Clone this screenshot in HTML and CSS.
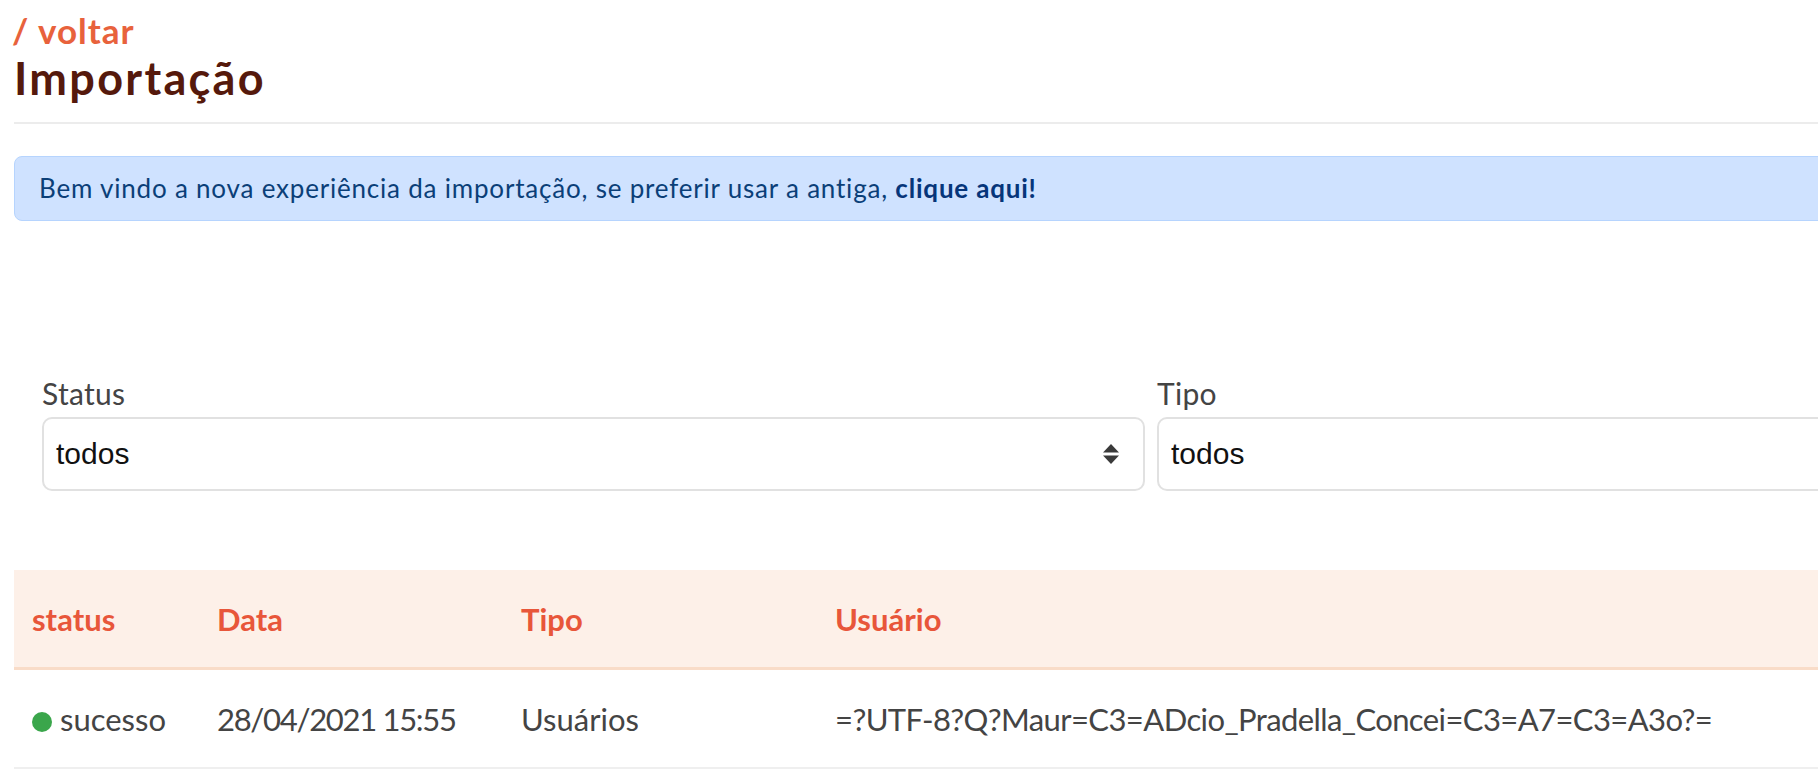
FILE: index.html
```html
<!DOCTYPE html>
<html lang="pt-BR">
<head>
<meta charset="utf-8">
<title>Importação</title>
<link rel="stylesheet" href="styles.css">
</head>
<body>
<div class="page">
  <header class="page-header">
    <a class="back" href="#">/ voltar</a>
    <h1 class="title">Importação</h1>
  </header>

  <div class="alert">Bem vindo a nova experiência da importação, se preferir usar a antiga, <a href="#" class="alert-link">clique aqui!</a></div>

  <div class="filters">
    <div class="field">
      <label class="label">Status</label>
      <div class="select">
        <span class="select-value">todos</span>
        <svg class="select-arrow" width="16" height="20" viewBox="0 0 16 20"><path d="M8 0 L16 8.5 L0 8.5 Z" fill="#3a3a3a"/><path d="M0 11.5 L16 11.5 L8 20 Z" fill="#3a3a3a"/></svg>
      </div>
    </div>
    <div class="field">
      <label class="label">Tipo</label>
      <div class="select">
        <span class="select-value">todos</span>
        <svg class="select-arrow" width="16" height="20" viewBox="0 0 16 20"><path d="M8 0 L16 8.5 L0 8.5 Z" fill="#3a3a3a"/><path d="M0 11.5 L16 11.5 L8 20 Z" fill="#3a3a3a"/></svg>
      </div>
    </div>
  </div>

  <table class="table">
    <thead>
      <tr>
        <th class="c-status">status</th>
        <th class="c-data">Data</th>
        <th class="c-tipo">Tipo</th>
        <th class="c-user">Usuário</th>
      </tr>
    </thead>
    <tbody>
      <tr>
        <td class="c-status"><span class="dot"></span>sucesso</td>
        <td class="c-data"><span class="date">28/04/2021 15:55</span></td>
        <td class="c-tipo">Usuários</td>
        <td class="c-user"><span class="user">=?UTF-8?Q?Maur=C3=ADcio_Pradella_Concei=C3=A7=C3=A3o?=</span></td>
      </tr>
    </tbody>
  </table>
</div>
</body>
</html>
```
FILE: styles.css
```css
html, body {
  margin: 0;
  padding: 0;
  overflow: hidden;
  background: #ffffff;
}

body {
  font-family: Lato, "Noto Sans", sans-serif;
  color: #3c3c3c;
}

.page {
  width: 2290px;
  padding-left: 14px;
  padding-top: 12px;
}

.page-header {
  display: flex;
  flex-direction: column;
  border-bottom: 2px solid #ececec;
  padding-bottom: 19px;
}

.back {
  font-size: 35px;
  font-weight: 700;
  line-height: 36px;
  letter-spacing: 1px;
  margin-left: -2px;
  color: #e8623c;
  text-decoration: none;
}

.title {
  margin: 5px 0 0 0;
  font-size: 45px;
  font-weight: 700;
  line-height: 50px;
  letter-spacing: 2.3px;
  color: #55190c;
}

.alert {
  margin-top: 32px;
  background: #cfe2ff;
  border: 1px solid #b6d4fe;
  border-radius: 8px;
  color: #0b3f78;
  font-size: 26px;
  line-height: 29px;
  letter-spacing: 0.8px;
  padding: 17px 24px;
}

.alert-link {
  color: #06357a;
  font-weight: 700;
  text-decoration: none;
}

.filters {
  display: grid;
  grid-template-columns: 1103px 1103px;
  gap: 12px;
  padding: 0 28px;
  margin-top: 156px;
}

.field {
  display: flex;
  flex-direction: column;
  gap: 8px;
}

.label {
  font-size: 30px;
  line-height: 32px;
  letter-spacing: 0.3px;
  color: #444444;
}

.select {
  height: 74px;
  box-sizing: border-box;
  border: 2px solid #e1e1e1;
  border-radius: 10px;
  display: flex;
  align-items: center;
  justify-content: space-between;
  padding: 0 24px 0 12px;
}

.select-value {
  font-family: "Liberation Sans", Arial, sans-serif;
  font-size: 30px;
  color: #111111;
}

.table {
  margin-top: 79px;
  width: 100%;
  border-collapse: collapse;
  font-size: 31px;
}

.table th {
  background: #fdf0e8;
  color: #e8563a;
  font-weight: 700;
  text-align: left;
  height: 97px;
  padding: 0 18px;
  border-bottom: 3px solid #f9dcc8;
  vertical-align: middle;
}

.table td {
  height: 97px;
  padding: 0 18px;
  border-bottom: 2px solid #efefef;
  color: #444444;
  vertical-align: middle;
}

.table .c-status { width: 149px; }
.table .c-data { width: 268px; }
.table .c-tipo { width: 278px; }

.date {
  letter-spacing: -1.3px;
}

.user {
  letter-spacing: -0.6px;
}

.dot {
  display: inline-block;
  width: 20px;
  height: 20px;
  border-radius: 50%;
  background: #3aa64b;
  margin-right: 8px;
  vertical-align: -1px;
}
```
